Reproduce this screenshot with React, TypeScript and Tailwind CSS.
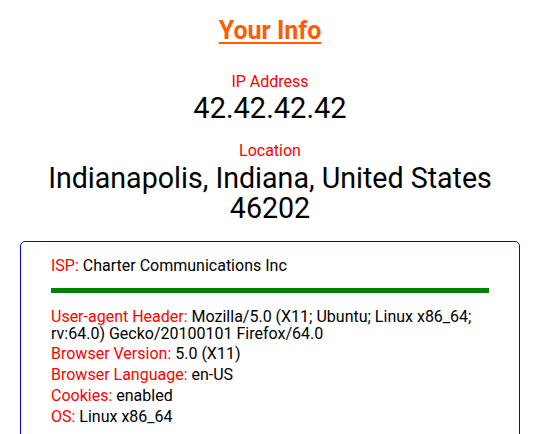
const rows: { label: string; value: string; gap: string }[] = [
  {
    label: "User-agent Header:",
    value: "Mozilla/5.0 (X11; Ubuntu; Linux x86_64; rv:64.0) Gecko/20100101 Firefox/64.0",
    gap: "mt-0",
  },
  { label: "Browser Version:", value: "5.0 (X11)", gap: "mt-[3px]" },
  { label: "Browser Language:", value: "en-US", gap: "mt-[4px]" },
  { label: "Cookies:", value: "enabled", gap: "mt-[4px]" },
  { label: "OS:", value: "Linux x86_64", gap: "mt-[4px]" },
];

export default function App() {
  return (
    <div
      className="min-h-screen bg-white text-black"
      style={{ fontFamily: "Roboto, 'Liberation Sans', sans-serif" }}
    >
      <div className="ml-[20px] w-[500px] pt-[16px]">
        {/* Heading */}
        <h1 className="text-center text-[25px] font-bold leading-[29px] text-[#ff5c00] underline underline-offset-[3px] decoration-[2px]">
          Your Info
        </h1>

        {/* IP */}
        <div className="mt-[28px] text-center">
          <div className="text-[16px] leading-[18px] text-[#ff0000]">IP Address</div>
          <div className="mt-[2px] text-[29px] leading-[30px]">42.42.42.42</div>
        </div>

        {/* Location */}
        <div className="mt-[19px] text-center">
          <div className="text-[16px] leading-[18px] text-[#ff0000]">Location</div>
          <div className="mt-[4px] text-[28.6px] leading-[29.5px]">
            Indianapolis, Indiana, United States
            <br />
            46202
          </div>
        </div>

        {/* Details card */}
        <div className="mt-[18px] rounded-[5px] border border-[#0000ff] px-[30px] pt-[15px] pb-[20px] text-[16px]">
          <p className="leading-[18px]">
            <span className="text-[#ff0000]">ISP:</span> Charter Communications Inc
          </p>
          <div className="mt-[13px] h-[5px] bg-[#008000]" />
          <div className="mt-[15px] flex flex-col">
            {rows.map((r) => (
              <p key={r.label} className={`leading-[17px] ${r.gap}`}>
                <span className="text-[#ff0000]">{r.label}</span> {r.value}
              </p>
            ))}
          </div>
        </div>
      </div>
    </div>
  );
}
